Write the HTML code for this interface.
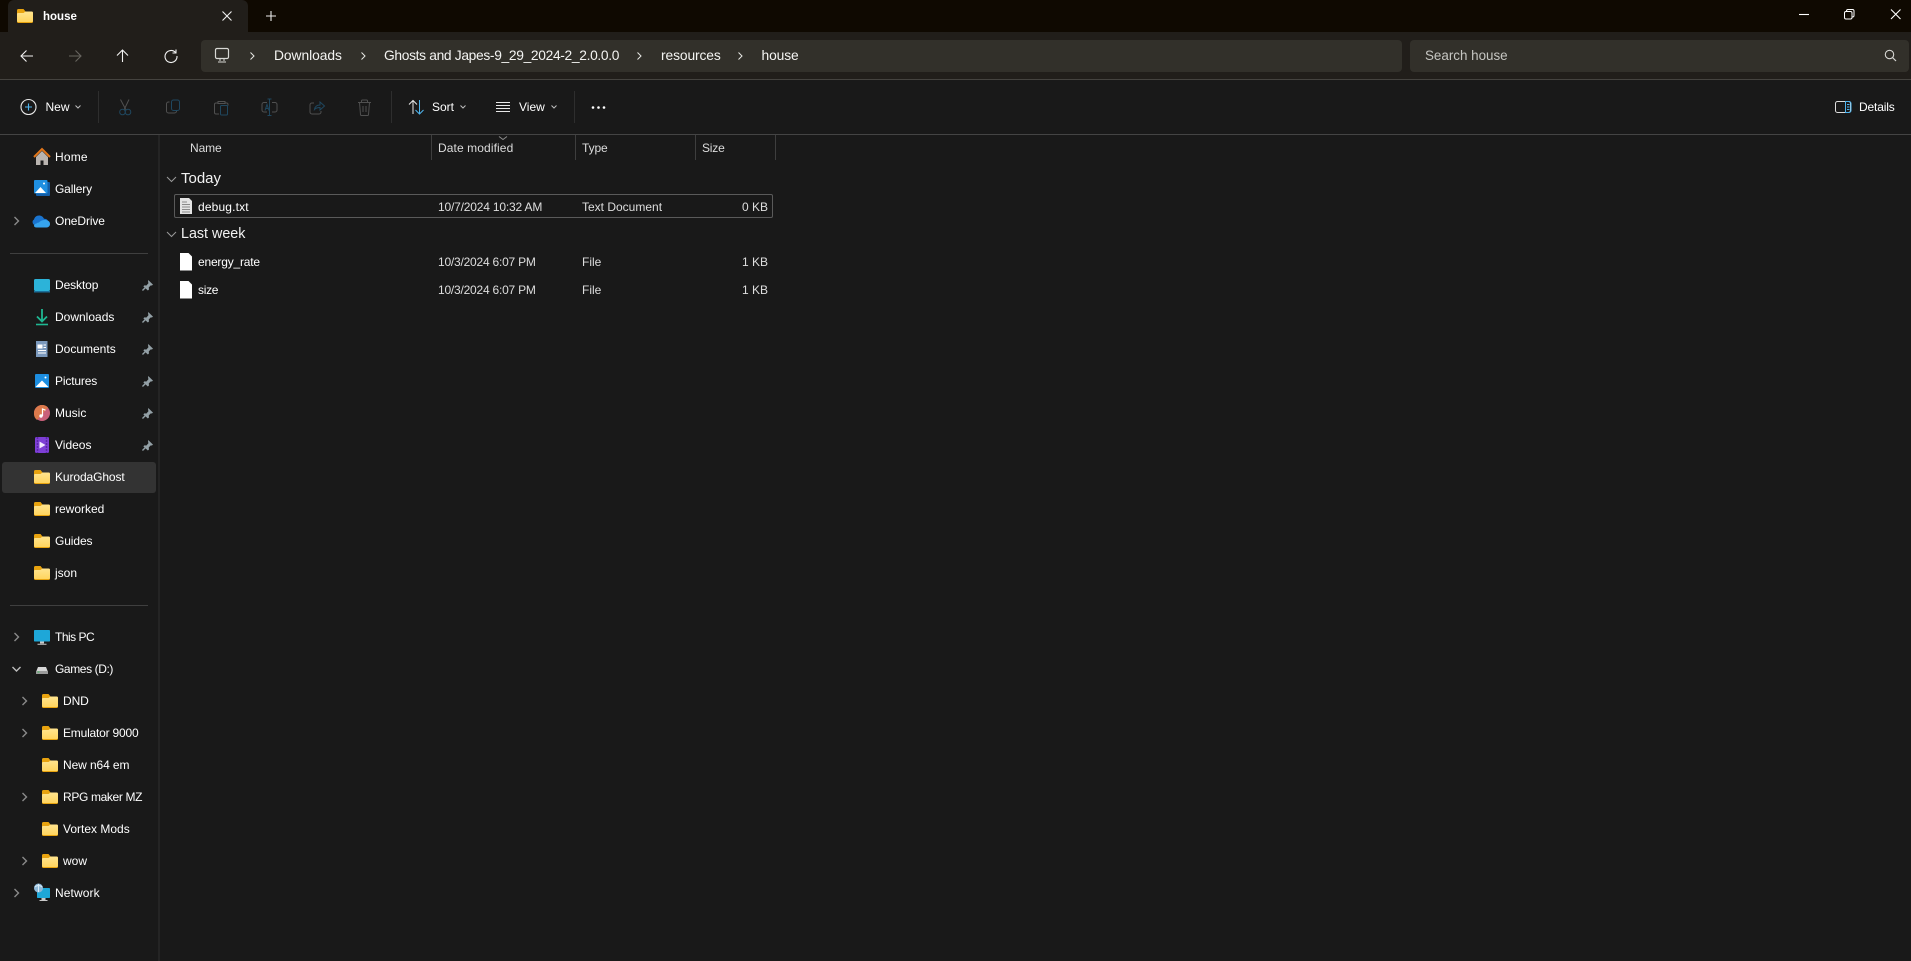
<!DOCTYPE html>
<html lang="en"><head><meta charset="utf-8"><title>house</title>
<style>
html,body{margin:0;padding:0;background:#191919;overflow:hidden}
#r{position:relative;width:1911px;height:961px;overflow:hidden;background:#191919;font-family:"Liberation Sans",sans-serif;font-size:12px;color:#fff}
.b{position:absolute}
.t{position:absolute;white-space:nowrap;line-height:16px;height:16px}
.a{font-size:13.8px;color:#f4f4f2}
.d{color:#dedede;letter-spacing:-.18px}
svg{position:absolute;left:0;top:0}
</style></head><body><div id="r">
<div class="b" style="left:0;top:0;width:1911px;height:32px;background:#0f0901"></div>
<div class="b" style="left:8px;top:0;width:240px;height:32px;background:#211e1a;border-radius:6px 6px 0 0"></div>
<div class="b" style="left:0;top:32px;width:1911px;height:48px;background:#211e1a"></div>
<div class="b" style="left:0;top:79px;width:1911px;height:1px;background:#45433f"></div>
<div class="b" style="left:201px;top:40px;width:1201px;height:32px;background:#32302a;border-radius:4px"></div>
<div class="b" style="left:1410px;top:40px;width:499px;height:32px;background:#32302a;border-radius:4px"></div>
<div class="b" style="left:0;top:134px;width:1911px;height:1px;background:#444"></div>
<div class="b" style="left:158px;top:135px;width:2px;height:826px;background:#242424"></div>
<div class="b" style="left:2px;top:462px;width:154px;height:31px;background:#333;border-radius:3px"></div>
<div class="b" style="left:10px;top:253px;width:138px;height:1px;background:#3f3f3f"></div>
<div class="b" style="left:10px;top:605px;width:138px;height:1px;background:#3f3f3f"></div>
<div class="b" style="left:98px;top:91px;width:1px;height:32px;background:#2e2e2e"></div>
<div class="b" style="left:391px;top:91px;width:1px;height:32px;background:#2e2e2e"></div>
<div class="b" style="left:574px;top:91px;width:1px;height:32px;background:#2e2e2e"></div>
<div class="b" style="left:431px;top:135px;width:1px;height:25px;background:#3e3e3e"></div>
<div class="b" style="left:575px;top:135px;width:1px;height:25px;background:#3e3e3e"></div>
<div class="b" style="left:695px;top:135px;width:1px;height:25px;background:#3e3e3e"></div>
<div class="b" style="left:775px;top:135px;width:1px;height:25px;background:#3e3e3e"></div>
<div class="b" style="left:174px;top:194px;width:597px;height:22px;border:1px solid #5a5a5a;border-radius:2px"></div>

<svg width="1911" height="961" viewBox="0 0 1911 961" fill="none">
<defs>
<linearGradient id="g" x1="0" y1="0" x2="0" y2="1"><stop offset="0" stop-color="#ffe48f"/><stop offset="1" stop-color="#ffd55f"/></linearGradient>
<symbol id="f" viewBox="0 0 16 14" overflow="visible"><path d="M0 1.500A1.500 1.500 0 0 1 1.500 0h5l2 2.500h6A1.500 1.500 0 0 1 16 4v8.500a1.500 1.500 0 0 1-1.500 1.500h-13A1.500 1.500 0 0 1 0 12.500z" fill="#e8a30f"/><path d="M0 5c0-.6.4-1 1-1h5.500l2-1.500h6c.9 0 1.500.6 1.500 1.500v8c0 .6-.4 1-1 1H1c-.6 0-1-.4-1-1z" fill="url(#g)"/></symbol>
<symbol id="p" viewBox="0 0 12 12" overflow="visible"><path d="M6.800 0l5.200 5-1.200 1-1.200-.2-2.200 2.200.2 2.300-1.200 1.100L1.500 7l1-1.200 2.300.2L7 3.600 6.600 1.300z" fill="#93a0a6"/><path d="M3.500 8.500L.5 11.500" stroke="#93a0a6" stroke-width="1.500"/></symbol>
</defs>
<!-- tab -->
<use href="#f" x="17" y="9" width="16" height="14"/>
<path d="M222.500 11.500l9 9M231.500 11.500l-9 9" stroke="#f0f0f0" stroke-width="1.100"/>
<path d="M271 11v10M266 16h10" stroke="#ececec" stroke-width="1.100"/>
<!-- window controls -->
<path d="M1799 14.500h10" stroke="#fff" stroke-width="1.100"/>
<rect x="1844.500" y="11.500" width="7.500" height="7.500" rx="1.500" stroke="#fff" stroke-width="1"/>
<path d="M1846.500 11.500v-.5a1.500 1.500 0 0 1 1.500-1.500h4.500a1.500 1.500 0 0 1 1.500 1.500v4.500a1.500 1.500 0 0 1-1.500 1.500" stroke="#fff"/>
<path d="M1891 9.500l9.500 9.500M1900.500 9.500l-9.500 9.500" stroke="#fff" stroke-width="1.100"/>
<!-- nav -->
<path d="M33 56H21M26.500 50.500L21 56l5.500 5.500" stroke="#f2f2f2" stroke-width="1.100"/>
<path d="M69 56h12M75.500 50.500L81 56l-5.500 5.500" stroke="#67655f" stroke-width="1.100"/>
<path d="M122.500 62V50M117 55.500l5.500-5.500 5.500 5.500" stroke="#f2f2f2" stroke-width="1.100"/>
<path d="M175.500 52.500a6 6 0 1 0 1.500 3.500M176 49.500v3.500h-3.500" stroke="#f2f2f2" stroke-width="1.100"/>
<rect x="215.500" y="48.500" width="13" height="10" rx="1.500" stroke="#d8d8d4" stroke-width="1.200"/>
<path d="M220 59v2M224 59v2M218 62h8" stroke="#d8d8d4"/>
<g stroke="#e8e8e4" stroke-width="1"><path d="M250.500 52.500l3.500 3.500-3.500 3.500M361.500 52.500l3.500 3.500-3.500 3.500M637.500 52.500l3.500 3.500-3.500 3.500M738.500 52.500l3.500 3.500-3.500 3.500"/></g>
<circle cx="1889.500" cy="54.500" r="4.200" stroke="#d6d6d2" stroke-width="1.100"/><path d="M1892.500 57.500l3.500 3.500" stroke="#d6d6d2" stroke-width="1.200"/>
<!-- toolbar -->
<circle cx="28.500" cy="107" r="7.500" stroke="#e8e8e8" stroke-width="1.100"/><path d="M28.500 103.500v7M25 107h7" stroke="#4fb5ee" stroke-width="1.100"/>
<path d="M75.500 105.500l2.500 2.500 2.500-2.500" stroke="#bdbdbd"/>
<g stroke-width="1">
<path d="M120.500 99.500l5.500 10.500M129 99.500L124 110" stroke="#505050"/><circle cx="122.500" cy="112" r="2.800" stroke="#1f475f"/><circle cx="128" cy="112" r="2.800" stroke="#1f475f"/>
<path d="M169.500 102h-1a2 2 0 0 0-2 2v7a2 2 0 0 0 2 2h6a2 2 0 0 0 2-2" stroke="#505050"/><rect x="171.500" y="100" width="8" height="10.500" rx="2" stroke="#1f475f"/>
<path d="M218 103h-2a1.500 1.500 0 0 0-1.500 1.500v8a1.500 1.500 0 0 0 1.500 1.500h3M218 101.500h7v2h-7zM225 103h1.500a1.500 1.500 0 0 1 1.500 1.500v1" stroke="#505050"/><rect x="220.500" y="105.500" width="7" height="9.500" rx="1" stroke="#1f475f"/>
<path d="M267 102.500h-3a2 2 0 0 0-2 2v5.500a2 2 0 0 0 2 2h3M272 102.500h3a2 2 0 0 1 2 2v5.500a2 2 0 0 1-2 2h-3" stroke="#505050"/><path d="M269.500 99.500v16M267.500 99h4M267.500 115.500h4M265 110.500l2-6 2 6M265.800 108.500h2.800" stroke="#1f475f"/>
<path d="M314 103h-2a2 2 0 0 0-2 2v7a2 2 0 0 0 2 2h7a2 2 0 0 0 2-2v-1" stroke="#505050"/><path d="M314.500 109.500c.5-3 2.500-4.500 5.500-4.500v-3l4.500 4-4.500 4v-2.500c-2 0-4 .3-5.500 2z" stroke="#1f475f"/>
<path d="M358 102.500h13M361.500 102.500v-1.500a1 1 0 0 1 1-1h4a1 1 0 0 1 1 1v1.500M359.500 102.500l1 12a1 1 0 0 0 1 1h6a1 1 0 0 0 1-1l1-12M363 106v6M366 106v6" stroke="#505050"/>
</g>
<path d="M413 114v-13M409 104.500l4-4 4 4" stroke="#e8e8e8" stroke-width="1"/><path d="M419.500 100v13.500M415.500 110l4 4 4-4" stroke="#4fb5ee" stroke-width="1"/>
<path d="M460.500 105.500l2.500 2.500 2.500-2.500" stroke="#bdbdbd"/>
<path d="M496 102.500h14M496 105.500h14M496 108.500h14M496 111.500h14" stroke="#e8e8e8" stroke-width="1"/>
<path d="M551.500 105.500l2.500 2.500 2.500-2.500" stroke="#bdbdbd"/>
<circle cx="593" cy="107.500" r="1.300" fill="#fff"/><circle cx="598.500" cy="107.500" r="1.300" fill="#fff"/><circle cx="604" cy="107.500" r="1.300" fill="#fff"/>
<rect x="1835.500" y="101.500" width="15" height="11" rx="2" stroke="#dcdcdc"/><path d="M1845.500 101.500h3.500a2 2 0 0 1 2 2v7a2 2 0 0 1-2 2h-3.500z" stroke="#4fb5ee"/><path d="M1847 104.500h2.500M1847 107h2.500M1847 109.500h2.500" stroke="#4fb5ee"/>
<!-- sort chevron / group chevrons -->
<path d="M499 136.500l4 3 4-3" stroke="#8d8d8d"/>
<path d="M167 177l4.500 4.500 4.500-4.500M167 232l4.500 4.500 4.500-4.500" stroke="#9a9a9a"/>
<!-- file icons -->
<path d="M180 198h9l3 3v13h-12z" fill="#e4e4e4"/><path d="M182 202h5M182 204.500h8M182 207h8M182 209.500h8M182 212h8" stroke="#8a8a8a"/>
<path d="M180 253h8.500l3.500 3.500V270.500h-12z" fill="#fff"/><path d="M180 281h8.500l3.500 3.500V298.500h-12z" fill="#fff"/>
<!-- sidebar chevrons -->
<g stroke="#8a8a8a" stroke-width="1.400">
<path d="M14.500 217l4 4-4 4M14.500 633l4 4-4 4M14.500 889l4 4-4 4"/>
<path d="M22.500 697l4 4-4 4M22.500 729l4 4-4 4M22.500 793l4 4-4 4M22.500 857l4 4-4 4"/>
<path d="M12.500 667l4 4 4-4" stroke="#bdbdbd"/>
</g>
<!-- sidebar icons -->
<path d="M34 157l8-8 8 8" stroke="#e2761a" stroke-width="2"/><path d="M36 157l6-6 6 6v8h-4.500v-4.500h-3V165H36z" fill="#b9b4b0"/>
<rect x="36" y="182" width="14" height="14" rx="1" fill="#135ea8"/><rect x="34" y="180" width="13.500" height="13.500" rx="1" fill="#1f8fe0"/><path d="M35 193l5.500-6 5.500 6z" fill="#fff"/><circle cx="44" cy="183.500" r="1" fill="#fff"/>
<path d="M36 226a3 3 0 0 1-1-5.500c.6-2.500 2.500-4 5-4 2.300 0 4 1.200 5 3.200 2.500-.1 4.200 1.400 4.500 3.300z" fill="#1a74cf" transform="translate(-1,-1)"/><path d="M39 222.500c1.500-2 6-3.500 9.500-1.500 1.200.8 1.500 2 1.500 3 0 2-1.500 3.500-3.500 3.500H36.500c-1.500 0-2.500-.8-2.500-1.800 0-1.200 1-2 2.500-2.200.5-.7 1.500-.8 2.500-1z" fill="#36a4ee"/>
<rect x="34" y="279" width="16" height="12" rx="1.500" fill="#2cb3d9"/><path d="M34 291h16v1.500H34z" fill="#1a6f9a"/>
<path d="M42 309v12M37 316.500l5 5 5-5" stroke="#1fb792" stroke-width="1.800"/><path d="M36 324.500h12" stroke="#1fb792" stroke-width="1.600"/>
<path d="M36 341h11.500v16H36z" fill="#7b99bd"/><path d="M38 345h4v3h-4zM43.500 345h2.500M43.500 347.500h2.500M38 350.500h8M38 353h8" stroke="#fff" fill="#fff"/>
<rect x="35" y="374" width="14" height="14" rx="1" fill="#1c8ddf"/><path d="M35.500 387l6.500-6.500 6.500 6.500z" fill="#fff"/><circle cx="45.500" cy="377.500" r="1" fill="#fff"/>
<circle cx="42" cy="413" r="8" fill="#c9607a"/><path d="M34 413a8 8 0 0 1 8-8 8 8 0 0 1 6 2.500L37 420a8 8 0 0 1-3-7z" fill="#dc7a4c"/><path d="M42.500 416v-7l3 1.200" stroke="#fff" stroke-width="1.200"/><circle cx="41" cy="416" r="1.700" fill="#fff"/>
<rect x="35" y="437" width="14" height="16" rx="1.500" fill="#7e3fd6"/><path d="M37.500 437v16M46.500 437v16" stroke="#5a28a8" stroke-width="1.500" stroke-dasharray="2 1"/><path d="M39.500 441.500l6 3.500-6 3.500z" fill="#f2e8ff"/>
<use href="#f" x="34" y="470" width="16" height="14"/>
<use href="#f" x="34" y="502" width="16" height="14"/>
<use href="#f" x="34" y="534" width="16" height="14"/>
<use href="#f" x="34" y="566" width="16" height="14"/>
<rect x="34" y="630" width="16" height="11.500" rx=".8" fill="#1ea7d8"/><path d="M40 641.500h4v2h-4zM37.500 643.700h9v1h-9z" fill="#c9c9c9"/>
<path d="M36 672l2-5h8l2 5v1.500H36z" fill="#d6d6d6"/><path d="M36 671h12v3H36z" fill="#9b9b9b"/><rect x="37.500" y="671.500" width="2" height="1" fill="#3fbf5f"/>
<use href="#f" x="42" y="694" width="16" height="14"/>
<use href="#f" x="42" y="726" width="16" height="14"/>
<use href="#f" x="42" y="758" width="16" height="14"/>
<use href="#f" x="42" y="790" width="16" height="14"/>
<use href="#f" x="42" y="822" width="16" height="14"/>
<use href="#f" x="42" y="854" width="16" height="14"/>
<rect x="37" y="888" width="13" height="10" rx=".8" fill="#1ea7d8"/><path d="M41.500 898h4v2h-4zM39.500 900h8v1h-8z" fill="#c9c9c9"/><circle cx="38.500" cy="888" r="4.500" fill="#8fb9d8"/><path d="M35 887c2-2 5-2 7 0M38.500 884v8" stroke="#d8ecf8"/>
<!-- pins -->
<use href="#p" x="142" y="280" width="11" height="11"/>
<use href="#p" x="142" y="312" width="11" height="11"/>
<use href="#p" x="142" y="344" width="11" height="11"/>
<use href="#p" x="142" y="376" width="11" height="11"/>
<use href="#p" x="142" y="408" width="11" height="11"/>
<use href="#p" x="142" y="440" width="11" height="11"/>
</svg>

<span class="t" style="left:43px;top:9px;font-weight:bold;font-size:11.500px">house</span>
<span class="t a" style="left:274px;top:48px;letter-spacing:-.05px">Downloads</span>
<span class="t a" style="left:384px;top:48px;letter-spacing:-.33px">Ghosts and Japes-9_29_2024-2_2.0.0.0</span>
<span class="t a" style="left:661px;top:48px;letter-spacing:-.1px">resources</span>
<span class="t a" style="left:761.500px;top:48px;letter-spacing:-.1px">house</span>
<span class="t" style="left:1425px;top:48px;font-size:13.400px;color:#c6c6c2">Search house</span>
<span class="t" style="left:45.500px;top:99px">New</span>
<span class="t" style="left:432px;top:99px">Sort</span>
<span class="t" style="left:519px;top:99px">View</span>
<span class="t" style="left:1859px;top:99px;letter-spacing:-.15px">Details</span>

<span class="t" style="left:55px;top:149px;letter-spacing:.2px">Home</span>
<span class="t" style="left:55px;top:181px;letter-spacing:-.15px">Gallery</span>
<span class="t" style="left:55px;top:213px;letter-spacing:-.1px">OneDrive</span>
<span class="t" style="left:55px;top:277px;letter-spacing:-.1px">Desktop</span>
<span class="t" style="left:55px;top:309px">Downloads</span>
<span class="t" style="left:55px;top:341px">Documents</span>
<span class="t" style="left:55px;top:373px;letter-spacing:-.15px">Pictures</span>
<span class="t" style="left:55px;top:405px">Music</span>
<span class="t" style="left:55px;top:437px">Videos</span>
<span class="t" style="left:55px;top:469px;letter-spacing:-.1px">KurodaGhost</span>
<span class="t" style="left:55px;top:501px">reworked</span>
<span class="t" style="left:55px;top:533px;letter-spacing:-.1px">Guides</span>
<span class="t" style="left:55px;top:565px">json</span>
<span class="t" style="left:55px;top:629px;letter-spacing:-.5px">This PC</span>
<span class="t" style="left:55px;top:661px;letter-spacing:-.4px">Games (D:)</span>
<span class="t" style="left:63px;top:693px;letter-spacing:-.1px">DND</span>
<span class="t" style="left:63px;top:725px;letter-spacing:-.2px">Emulator 9000</span>
<span class="t" style="left:63px;top:757px;letter-spacing:-.1px">New n64 em</span>
<span class="t" style="left:63px;top:789px;letter-spacing:-.35px">RPG maker MZ</span>
<span class="t" style="left:63px;top:821px">Vortex Mods</span>
<span class="t" style="left:63px;top:853px">wow</span>
<span class="t" style="left:55px;top:885px;letter-spacing:.1px">Network</span>

<span class="t" style="left:190px;top:140px;color:#dcdcdc;letter-spacing:-.1px">Name</span>
<span class="t" style="left:438px;top:140px;color:#dcdcdc;letter-spacing:.1px">Date modified</span>
<span class="t" style="left:582px;top:140px;color:#dcdcdc;letter-spacing:-.1px">Type</span>
<span class="t" style="left:702px;top:140px;color:#dcdcdc;letter-spacing:-.2px">Size</span>

<span class="t" style="left:181px;top:171px;font-size:15px;color:#f2f2f2">Today</span>
<span class="t" style="left:181px;top:226px;font-size:14.300px;color:#f2f2f2">Last week</span>

<span class="t" style="left:198px;top:199px;letter-spacing:.15px">debug.txt</span>
<span class="t d" style="left:438px;top:199px">10/7/2024 10:32 AM</span>
<span class="t d" style="left:582px;top:199px;letter-spacing:0">Text Document</span>
<span class="t d" style="right:1143px;top:199px;letter-spacing:0">0 KB</span>

<span class="t" style="left:198px;top:254px;letter-spacing:-.2px">energy_rate</span>
<span class="t d" style="left:438px;top:254px;letter-spacing:-.22px">10/3/2024 6:07 PM</span>
<span class="t d" style="left:582px;top:254px;letter-spacing:0">File</span>
<span class="t d" style="right:1143px;top:254px;letter-spacing:0">1 KB</span>

<span class="t" style="left:198px;top:282px;letter-spacing:-.3px">size</span>
<span class="t d" style="left:438px;top:282px;letter-spacing:-.22px">10/3/2024 6:07 PM</span>
<span class="t d" style="left:582px;top:282px;letter-spacing:0">File</span>
<span class="t d" style="right:1143px;top:282px;letter-spacing:0">1 KB</span>
</div></body></html>
